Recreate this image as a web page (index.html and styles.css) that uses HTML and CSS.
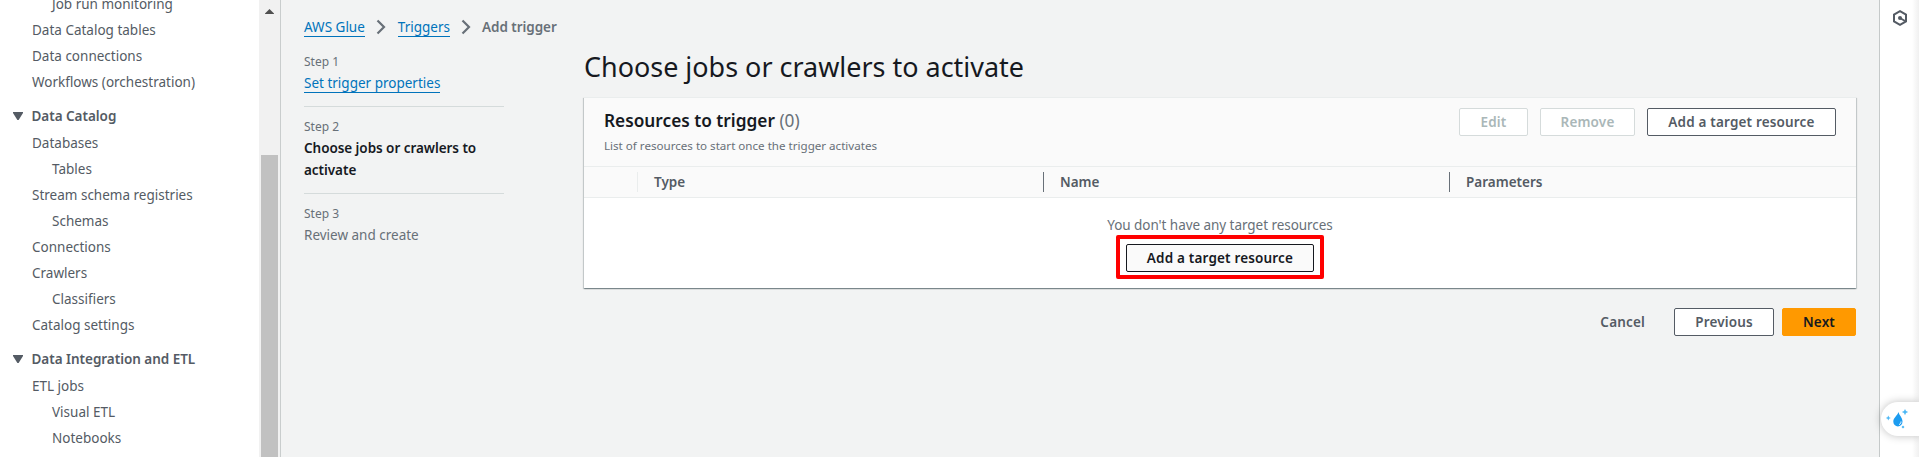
FILE: index.html
```html
<!DOCTYPE html>
<html lang="en">
<head>
<meta charset="utf-8">
<title>AWS Glue - Add trigger</title>
<link rel="stylesheet" href="styles.css">
</head>
<body>
<div class="app">
  <nav class="sidebar">
    <ul class="nav">
      <li class="nav-item sub">Job run monitoring</li>
      <li class="nav-item">Data Catalog tables</li>
      <li class="nav-item">Data connections</li>
      <li class="nav-item">Workflows (orchestration)</li>
      <li class="nav-section"><svg class="caret" viewBox="0 0 10 8"><path d="M0 0h10v1L5.6 8H4.4L0 1z"/></svg><span>Data Catalog</span></li>
      <li class="nav-item">Databases</li>
      <li class="nav-item sub">Tables</li>
      <li class="nav-item">Stream schema registries</li>
      <li class="nav-item sub">Schemas</li>
      <li class="nav-item">Connections</li>
      <li class="nav-item">Crawlers</li>
      <li class="nav-item sub">Classifiers</li>
      <li class="nav-item">Catalog settings</li>
      <li class="nav-section"><svg class="caret" viewBox="0 0 10 8"><path d="M0 0h10v1L5.6 8H4.4L0 1z"/></svg><span>Data Integration and ETL</span></li>
      <li class="nav-item">ETL jobs</li>
      <li class="nav-item sub">Visual ETL</li>
      <li class="nav-item sub">Notebooks</li>
    </ul>
    <div class="scrollbar">
      <svg class="arrow" viewBox="0 0 9 5"><path d="M4.5 0 9 4.5V5H0v-.5z"/></svg>
      <div class="thumb"></div>
    </div>
  </nav>
  <main class="main">
    <div class="left">
      <div class="crumbs">
        <a class="link">AWS Glue</a>
        <svg class="chev" viewBox="0 0 10 16"><path d="M1.5 1.5 8 8l-6.5 6.5"/></svg>
        <a class="link">Triggers</a>
        <svg class="chev" viewBox="0 0 10 16"><path d="M1.5 1.5 8 8l-6.5 6.5"/></svg>
        <b class="current">Add trigger</b>
      </div>
      <ol class="steps">
        <li class="step"><small class="num">Step 1</small><a class="link step-link">Set trigger properties</a></li>
        <li class="step"><small class="num">Step 2</small><b class="active">Choose jobs or crawlers to activate</b></li>
        <li class="step"><small class="num">Step 3</small><span class="todo">Review and create</span></li>
      </ol>
    </div>
    <section class="content">
      <h1 class="title">Choose jobs or crawlers to activate</h1>
      <div class="card">
        <header class="card-head">
          <div>
            <h2 class="card-title">Resources to trigger <span class="count">(0)</span></h2>
            <p class="desc">List of resources to start once the trigger activates</p>
          </div>
          <div class="actions">
            <button class="btn disabled edit">Edit</button>
            <button class="btn disabled remove">Remove</button>
            <button class="btn add">Add a target resource</button>
          </div>
        </header>
        <div class="cols">
          <div class="col"></div>
          <div class="col">Type</div>
          <div class="col">Name</div>
          <div class="col">Parameters</div>
        </div>
        <div class="empty">
          <p class="empty-text">You don't have any target resources</p>
          <div class="highlight"><button class="btn hover">Add a target resource</button></div>
        </div>
      </div>
      <footer class="foot">
        <button class="btn plain">Cancel</button>
        <button class="btn previous">Previous</button>
        <button class="btn primary">Next</button>
      </footer>
    </section>
  </main>
  <aside class="tools">
    <svg class="hex" viewBox="0 0 16 16"><path d="M8 1.2 14 4.6v6.8L8 14.8 2 11.4V4.6z"/><path d="m8 8 5 3"/><circle cx="8" cy="8" r="2"/></svg>
    <div class="pill">
      <svg class="drop" viewBox="0 0 24 22"><path class="d" d="M12.5 3c.8 3.5 4 5.500 4 9.500a4.600 4.900 0 0 1-9.200 0C7.300 9 11 7 12.500 3z"/><path class="s" d="M19 0l1 2 2.200 1-2.200 1-1 2.200L18 4l-2.200-1L18 2zM2.300 6.500l.8 1.700 1.700.8-1.700.8-.8 1.700-.8-1.700L-.2 9l1.700-.8zM17 16.500l1.500 1.500-1.500 1.500-1.500-1.500z"/><path class="w" d="M13 15.500c1.500-.4 2-1.500 2-3"/></svg>
    </div>
  </aside>
</div>
</body>
</html>
```
FILE: styles.css
```css
* { box-sizing: border-box; margin: 0; padding: 0; }
body { font-family: "Noto Sans", "Open Sans", sans-serif; font-size: 13.5px; line-height: 22px; color: #545b64; background: #f2f3f3; overflow: hidden; }
ul, ol { list-style: none; }
button { font: inherit; }
.app { display: flex; height: 457px; overflow: hidden; }
.sidebar { display: flex; width: 281px; background: #fff; border-right: 1px solid #c9cdcd; flex: none; }
.nav { flex: 1; margin-top: -9px; }
.nav-item { height: 26px; line-height: 26px; padding-left: 32px; white-space: nowrap; }
.sub { padding-left: 52px; }
.nav-section { display: flex; align-items: center; height: 35px; padding: 7px 0 0 13px; gap: 8.5px; font-weight: 600; white-space: nowrap; letter-spacing: -.03px; }
.caret { width: 10px; height: 8px; fill: #545b64; }
.scrollbar { width: 21px; background: #f1f1f1; padding: 9px 2px 0; display: flex; flex-direction: column; align-items: center; }
.arrow { width: 9px; height: 5px; fill: #505050; }
.thumb { width: 17px; flex: 1; margin-top: 141px; background: #c1c1c1; }
.main { flex: 1; display: flex; padding: 16px 23px 0 23px; }
.left { width: 200px; flex: none; margin-right: 80px; }
.crumbs { display: flex; align-items: center; height: 22px; white-space: nowrap; }
.link { color: #0073bb; border-bottom: 1px solid #0073bb; display: inline-block; line-height: 19px; height: 19px; }
.step-link { display: block; width: fit-content; margin: 3px 0 1px; }
.chev { width: 10px; height: 16px; margin: 0 12px 0 11px; fill: none; stroke: #687078; stroke-width: 2.2; flex: none; }
.current { color: #687078; font-weight: 600; margin-left: -1px; letter-spacing: -.05px; }
.step { border-bottom: 1px solid #d5dbdb; padding-bottom: 12px; margin-bottom: 11px; }
.steps { padding-top: 15px; }
.step:last-child { border: 0; }
.num { display: block; font-size: 12px; line-height: 18px; color: #687078; }
.active { display: block; color: #16191f; font-weight: 600; padding-top: 1px; letter-spacing: -.05px; }
.todo { display: block; color: #687078; padding-top: 1px; }
.content { flex: 1; padding-top: 33px; }
.title { font-size: 26.95px; line-height: 36px; font-weight: 400; color: #16191f; white-space: nowrap; }
.card { height: 191px; margin-top: 12px; background: #fff; box-shadow: 0 1px 1px rgba(0,28,36,.3), 1px 1px 1px rgba(0,28,36,.15), -1px 1px 1px rgba(0,28,36,.15); border-top: 1px solid #eaeded; }
.card-head { display: flex; justify-content: space-between; height: 69px; padding: 10px 20px 0; background: #fafafa; border-bottom: 1px solid #eaeded; }
.card-title { font-size: 17.25px; line-height: 26px; font-weight: 600; color: #16191f; }
.count { font-weight: 400; color: #687078; }
.desc { font-size: 11.6px; line-height: 18px; margin-top: 3px; color: #687078; }
.actions { display: flex; gap: 12px; }
.btn { height: 28px; border: 1px solid #545b64; border-radius: 2px; background: #fff; color: #545b64; font-weight: 600; line-height: 25px; letter-spacing: .17px; white-space: nowrap; text-align: center; }
.disabled { border-color: #d5dbdb; color: #aab7b8; }
.edit { width: 69px; }
.remove { width: 95px; }
.add { width: 189px; }
.cols { display: grid; grid-template-columns: 54px 406px 406px 1fr; height: 31px; padding-top: 5px; background: #fafafa; border-bottom: 1px solid #eaeded; font-weight: 600; }
.col { height: 20px; line-height: 20px; border-right: 1px solid #687078; padding-left: 16px; }
.col:first-child { border-color: #eaeded; }
.col:last-child { border: 0; }
.empty { display: flex; flex-direction: column; align-items: center; padding-top: 16px; }
.empty-text { color: #687078; letter-spacing: -.05px; }
.highlight { display: flex; align-items: center; justify-content: center; width: 208px; height: 44px; margin-top: -1px; padding-top: 2px; border: 4px solid #f00; border-radius: 2px; }
.hover { width: 188px; background: #fafafa; border-color: #16191f; color: #16191f; }
.foot { display: flex; justify-content: flex-end; margin-top: 20px; }
.plain { border-color: transparent; background: none; padding: 0 20px; margin-right: 8px; }
.previous { width: 100px; margin-right: 8px; }
.primary { width: 74px; background: #f90; border-color: #f90; color: #16191f; }
.tools { width: 40px; flex: none; border-left: 1px solid #c5c9c9; background: linear-gradient(to right, #fff 32px, #f0f0f0); display: flex; flex-direction: column; justify-content: space-between; align-items: flex-end; padding: 10px 0 21px; }
.hex { width: 16px; height: 16px; margin-right: 11px; fill: none; stroke: #545b64; stroke-width: 2; }
.hex circle { fill: #545b64; stroke: none; }
.pill { width: 38px; height: 34px; border-radius: 17px 0 0 17px; background: #fff; box-shadow: 0 0 8px rgba(0,0,0,.25); padding: 7px 0 0 5px; }
.drop { width: 24px; height: 22px; display: block; overflow: visible; }
.d { fill: #1c9cf0; }
.s { fill: #4db8f5; }
.w { fill: none; stroke: #fff; stroke-width: 1; }
```
